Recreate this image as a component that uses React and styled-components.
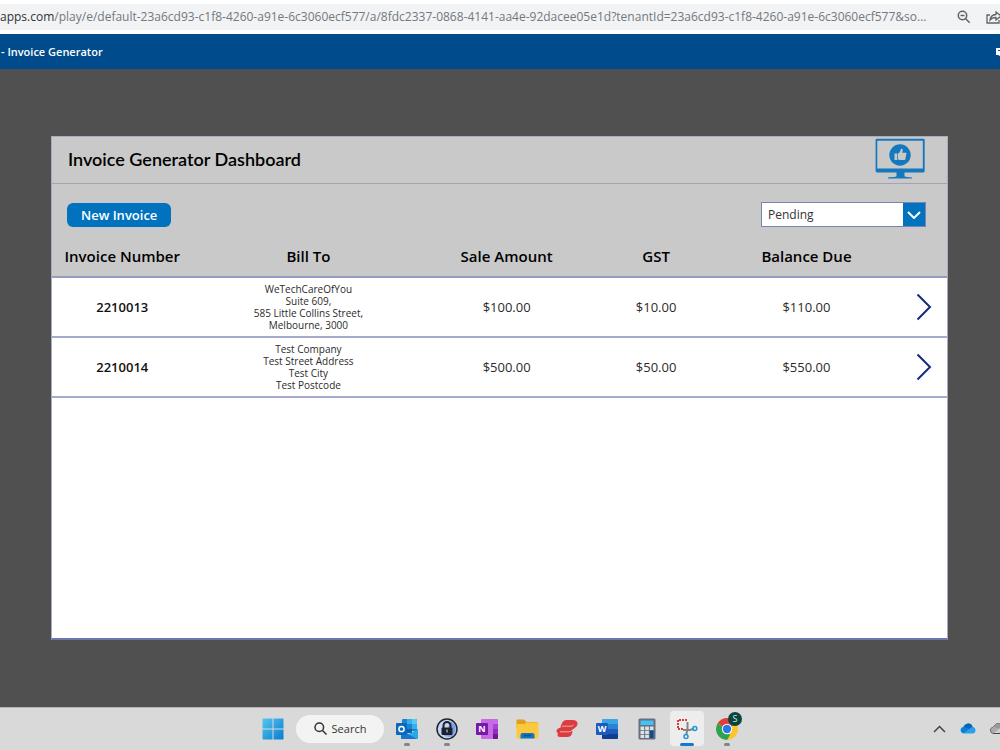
import React, { useState } from 'react';
import styled, { createGlobalStyle } from 'styled-components';

const GlobalStyle = createGlobalStyle`
  * {
    box-sizing: border-box;
  }
  body {
    margin: 0;
    font-family: "Open Sans", "Noto Sans", sans-serif;
    color: #000;
  }
  button, select {
    font-family: inherit;
  }
`;

const Page = styled.div`
  display: flex;
  flex-direction: column;
  min-height: 100vh;
  overflow: hidden;
  background: #505050;
`;

const AddressBar = styled.div`
  display: flex;
  align-items: center;
  height: 34px;
  border-top: 4px solid #fff;
  border-bottom: 4px solid #fff;
  background: #f1f3f4;
  overflow: hidden;
`;

const Url = styled.div`
  flex: 1;
  min-width: 0;
  white-space: nowrap;
  font-size: 12px;
  line-height: 20px;
  color: #75787c;
`;

const Host = styled.span`
  color: #303236;
`;

const BarActions = styled.div`
  display: flex;
  flex: none;
  gap: 15px;
  width: 43px;
`;

const IconButton = styled.button`
  display: flex;
  flex: none;
  align-items: center;
  justify-content: center;
  padding: 0;
  border: none;
  background: none;
  color: ${props => props.$color || '#5f6368'};
  cursor: pointer;
`;

const AppHeader = styled.header`
  display: flex;
  align-items: center;
  justify-content: space-between;
  height: 35px;
  background: #004b8b;
  color: #fff;
  overflow: hidden;
`;

const AppName = styled.div`
  padding-left: 1px;
  font-size: 11px;
  font-weight: 600;
  line-height: 16px;
`;

const Workspace = styled.main`
  display: flex;
  flex: 1;
  padding: 67px 52px 67px 51px;
`;

const Panel = styled.section`
  display: flex;
  flex: 1;
  flex-direction: column;
  min-width: 0;
  border: 1px solid #a9acbf;
  border-bottom: 2px solid #6a76ae;
  background: #fff;
`;

const TitleBar = styled.div`
  display: flex;
  align-items: center;
  justify-content: space-between;
  height: 47px;
  padding: 0 22px 2px 16px;
  border-bottom: 1px solid #a2a4b3;
  background: #c9c9c9;
`;

const Title = styled.h1`
  margin: 0;
  font-family: Lato, sans-serif;
  font-size: 18px;
  font-weight: 600;
  line-height: 24px;
`;

const Toolbar = styled.div`
  display: flex;
  align-items: center;
  justify-content: space-between;
  height: 51px;
  padding: 10px 21px 0 15px;
  background: #c9c9c9;
`;

const PrimaryButton = styled.button`
  height: 24px;
  padding: 0 14px;
  border: none;
  border-radius: 6px;
  background: #0072be;
  color: #fff;
  font-size: 13px;
  font-weight: 600;
  line-height: 24px;
  cursor: pointer;
`;

const SelectWrap = styled.div`
  display: flex;
  width: 165px;
  height: 25px;
  border: 1px solid #7a84b4;
  background: #0072be;
`;

const StatusSelect = styled.select`
  flex: 1;
  min-width: 0;
  padding: 0 6px;
  border: none;
  border-radius: 0;
  appearance: none;
  background: #fff;
  color: #333;
  font-size: 12px;
`;

const Arrow = styled.label`
  display: flex;
  align-items: center;
  justify-content: center;
  width: 22px;
`;

const InvoiceTable = styled.table`
  width: 100%;
  table-layout: fixed;
  border-collapse: collapse;
`;

const HeadCell = styled.th`
  height: 42px;
  padding: 0;
  border-bottom: 2px solid #959cc3;
  background: #c9c9c9;
  font-size: 15px;
  font-weight: 600;
`;

const Cell = styled.td`
  height: 60px;
  padding: 0;
  border-bottom: 2px solid #a5abcd;
  text-align: center;
  font-size: ${props => (props.$small ? '10px' : '13px')};
  font-weight: ${props => (props.$strong ? 600 : 400)};
  line-height: ${props => (props.$small ? '12px' : '20px')};
  color: ${props => (props.$strong ? '#111' : '#2b2b2b')};
`;

const ChevronButton = styled(IconButton)`
  margin: 0 15px 0 auto;
`;

const Taskbar = styled.footer`
  display: grid;
  grid-template-columns: 1fr auto 1fr;
  align-items: center;
  height: 43px;
  padding-bottom: 1px;
  border-top: 1px solid #b5b5b5;
  background: #d9d9d9;
`;

const Apps = styled.nav`
  display: flex;
  grid-column: 2;
  align-items: center;
  gap: 6px;
`;

const AppButton = styled.button`
  position: relative;
  display: flex;
  align-items: center;
  justify-content: center;
  width: 34px;
  height: 35px;
  padding: 0;
  border: none;
  border-radius: 4px;
  background: ${props => (props.$active ? '#ededed' : 'transparent')};
  cursor: pointer;

  &::after {
    content: "";
    display: ${props => (props.$open || props.$active ? 'block' : 'none')};
    position: absolute;
    bottom: 0;
    left: 50%;
    width: ${props => (props.$active ? '14px' : '6px')};
    height: 3px;
    border-radius: 2px;
    background: ${props => (props.$active ? '#1478cf' : '#858585')};
    transform: translateX(-50%);
  }
`;

const SearchButton = styled.button`
  display: flex;
  align-items: center;
  justify-content: center;
  gap: 5px;
  width: 88px;
  height: 28px;
  border: none;
  border-radius: 14px;
  background: #f3f3f3;
  color: #333;
  font-size: 11px;
  cursor: pointer;
`;

const Badge = styled.span`
  position: absolute;
  top: 1px;
  right: 2px;
  width: 14px;
  height: 14px;
  border-radius: 50%;
  background: #09463f;
  color: #d5e5e2;
  font-size: 9px;
  line-height: 14px;
  text-align: center;
`;

const Tray = styled.div`
  display: flex;
  align-items: center;
  justify-content: flex-end;
  gap: 14px;
  margin-right: -6px;
`;

const MonitorLogo = () => (
  <svg width="50" height="42" viewBox="0 0 50 42" fill="#1478bf">
    <path fillRule="evenodd" d="M1.500.8h47q1.200 0 1.200 1.200v31q0 1.400-1.400 1.400H2q-1.400 0-1.400-1.400V2Q.6.800 1.500.8zM2.300 2.700v27.800h45.500V2.700z" />
    <path d="M21.500 34h8v4.200c1 .8 4 .8 7.500 1.200v1.100H13v-1.100c3.500-.4 7.500-.4 8.500-1.200z" />
    <circle cx="25" cy="17" r="10.700" />
    <path fill="#c9c9c9" d="M19.500 15.500h2.800v6.500h-2.800zM23 15.500l1.800-1.300 1-3c.3-.8 2-.5 1.900 1l-.5 2.600h3.400c1 0 1.300 1.300.6 1.800l-.8 4.400c-.1.600-.6 1-1.200 1h-4.700L23 21.300z" />
  </svg>
);

const WindowsIcon = () => (
  <svg width="22" height="22" viewBox="0 0 22 22">
    <defs>
      <linearGradient id="win" x1="0" y1="0" x2="1" y2="1">
        <stop offset="0" stopColor="#55c8ef" />
        <stop offset="1" stopColor="#087bd0" />
      </linearGradient>
    </defs>
    <path fill="url(#win)" d="M1 .5h9.500v10H.5V1zM11.500.5H21l.5.500v9.500h-10zM.5 11.500h10v10H1l-.5-.5zM11.500 11.500h10V21l-.5.500h-9.500z" />
  </svg>
);

const OutlookIcon = () => (
  <svg width="22" height="22" viewBox="0 0 22 22">
    <rect x="6" y="1" width="15" height="12" rx="1" fill="#1684d3" />
    <path fill="#38aee8" d="M11 1h5v5h-5zM16 6h5v5h-5z" />
    <path fill="#55caf5" d="M16 1h4q1 0 1 1v4h-5z" />
    <path fill="#0d5faf" d="M6 6h5v5H6zM11 11h5v4h-5z" />
    <path fill="#2aa7e7" d="M5 12l8 4 9-5v9q0 1-1 1H6q-1 0-1-1z" />
    <path fill="#1676ca" d="M6 13l15 8H6q-1 0-1-1v-7z" />
    <rect x="0" y="5" width="11" height="12" rx="1" fill="#0969bd" />
    <circle cx="5.500" cy="11" r="2.600" fill="none" stroke="#fff" strokeWidth="1.500" />
  </svg>
);

const OneNoteIcon = () => (
  <svg width="22" height="22" viewBox="0 0 22 22">
    <rect x="5" y="1" width="17" height="20" rx="1" fill="#c66be5" />
    <path fill="#a944d0" d="M17 6h5v5h-5z" />
    <path fill="#8f2fbd" d="M17 11h5v5h-5z" />
    <path fill="#6f1795" d="M17 16h5v4q0 1-1 1h-4z" />
    <rect x="0" y="5" width="12" height="12" rx="1" fill="#7719aa" />
    <text x="6" y="14" textAnchor="middle" fill="#fff" fontSize="9" fontWeight="700" fontFamily="Open Sans, sans-serif">N</text>
  </svg>
);

const WordIcon = () => (
  <svg width="22" height="22" viewBox="0 0 22 22">
    <rect x="6" y="1" width="16" height="20" rx="1" fill="#3da4e8" />
    <path fill="#2b83d2" d="M6 6h16v5H6z" />
    <path fill="#1b5cbe" d="M6 11h16v5H6z" />
    <path fill="#103f91" d="M6 16h16v4q0 1-1 1H7q-1 0-1-1z" />
    <rect x="0" y="5" width="12" height="12" rx="1" fill="#1a5cbd" />
    <text x="6" y="14" textAnchor="middle" fill="#fff" fontSize="9" fontWeight="700" fontFamily="Open Sans, sans-serif">W</text>
  </svg>
);

const LockIcon = () => (
  <svg width="22" height="22" viewBox="0 0 22 22">
    <circle cx="11" cy="11" r="10" fill="#c3d6f7" stroke="#20242c" strokeWidth="1.500" />
    <path d="M15 3.500a8.500 8.500 0 0 1-1 15.500l-6-1z" fill="#7b9df0" />
    <path d="M7.500 10V7.500a3.500 3.500 0 0 1 7 0V10" fill="none" stroke="#1d2028" strokeWidth="2" />
    <rect x="5.500" y="9.500" width="11" height="7.500" rx="1" fill="#1d2028" />
    <path d="M11 11.500v3" stroke="#9aa5bd" strokeWidth="1.500" />
  </svg>
);

const FolderIcon = () => (
  <svg width="23" height="20" viewBox="0 0 23 20">
    <path fill="#dda01f" d="M1 .5h7l2.500 2.500H21q1 0 1 1v5H.5V1z" />
    <path fill="#fbc93d" d="M.5 5h8l2-1.500h11q1 0 1 1V18q0 1.500-1.500 1.500H2Q.5 19.500.5 18z" />
    <path fill="#1177c4" d="M4.500 19.500V16q0-2 2-2h10q2 0 2 2v3.500z" />
    <path d="M8 16.500h7" stroke="#0a4f91" strokeWidth="1.500" />
  </svg>
);

const RedIcon = () => (
  <svg width="22" height="20" viewBox="0 0 22 20">
    <path fill="#dc3c3f" d="M10.500 1h6q5.500 0 5 4.500-.5 2-2.500 3.200L16 11q.5 1 .3 2.500-.8 4.500-5.300 4.500H4q-2.800-.3-2.500-2.500L2 14Q0 13.500.5 11.500q.8-2.500 4-2.700Q4.500 7 6 4q1.500-3 4.500-3z" />
    <path fill="none" stroke="#efaaa8" d="M6 7.200h9q2 0 2.800-1.600M4 12.800h9q2.500 0 3-1.800" />
  </svg>
);

const CalculatorIcon = () => (
  <svg width="18" height="22" viewBox="0 0 18 22">
    <rect x=".5" y=".5" width="17" height="21" rx="1.500" fill="#65707c" />
    <rect x="2.500" y="2.500" width="13" height="4.500" fill="#45c2f2" />
    <path fill="#dde2e7" d="M2.500 8.500h3.700V12H2.500zM7.200 8.500h3.700V12H7.200zM11.900 8.500h3.600V12h-3.600zM2.500 12.800h3.700v3.500H2.500zM7.200 12.800h3.700v3.500H7.200zM2.500 17.100h3.700v2.900H2.500zM7.200 17.100h3.700v2.900H7.200z" />
    <path fill="#0c4e8f" d="M11.900 12.800h3.600V20h-3.600z" />
  </svg>
);

const SnipIcon = () => (
  <svg width="22" height="22" viewBox="0 0 22 22" fill="none">
    <path d="M11 2H2v9h5" stroke="#d63b3b" strokeWidth="2" strokeDasharray="2 1" />
    <path d="M11.500 4v8l-1.500 5M7 12h7l4-1.500" stroke="#858585" strokeWidth="2" />
    <circle cx="10" cy="18.500" r="2" stroke="#2196dc" strokeWidth="1.500" />
    <circle cx="18.800" cy="10.500" r="2" stroke="#2196dc" strokeWidth="1.500" />
  </svg>
);

const ChromeIcon = () => (
  <svg width="22" height="22" viewBox="0 0 22 22">
    <path fill="#de4035" d="M11 11L1.500 5.500a11 11 0 0 1 19 0z" />
    <path fill="#fbc52c" d="M11 11l9.500-5.500A11 11 0 0 1 11 22z" />
    <path fill="#31a350" d="M11 11l3 6-3 5A11 11 0 0 1 1.500 5.500z" />
    <circle cx="11" cy="11" r="5.200" fill="#fff" />
    <circle cx="11" cy="11" r="4.200" fill="#2879e8" />
  </svg>
);

const SearchIcon = () => (
  <svg width="13" height="13" viewBox="0 0 13 13" fill="none" stroke="#333" strokeWidth="1.500">
    <circle cx="5.300" cy="5.300" r="4.300" />
    <path d="M8.500 8.500l4 4" />
  </svg>
);

const CloudIcon = ({ muted }) => (
  <svg width="16" height="11" viewBox="0 0 16 11" stroke={muted ? '#444' : 'none'}>
    <path fill={muted ? '#d0d0d0' : '#28a0ea'} d="M4 10.500q-3.500-.2-3.500-3.200 0-2.800 3-3.200Q5 .5 8.500.5q3 0 4 3.200 3 .5 3 3.500 0 3-3 3.300z" />
    <path fill={muted ? '#999' : '#0864b5'} stroke="none" d="M3.500 4Q5 .5 8.500.5q3 0 4 3.200L9 6z" />
    <path fill={muted ? '#aaa' : '#0a7fd5'} stroke="none" d="M1 7q.3-2.800 3-2.900l5 2-5 3.900Q1.500 10 1 7z" />
  </svg>
);

const invoices = [
  {
    number: '2210013',
    billTo: ['WeTechCareOfYou', 'Suite 609,', '585 Little Collins Street,', 'Melbourne, 3000'],
    sale: '$100.00',
    gst: '$10.00',
    balance: '$110.00'
  },
  {
    number: '2210014',
    billTo: ['Test Company', 'Test Street Address', 'Test City', 'Test Postcode'],
    sale: '$500.00',
    gst: '$50.00',
    balance: '$550.00'
  }
];

// share of the table width for each column
const columns = ['15.7%', '25.9%', '18.4%', '15%', '18.6%', '6.4%'];

const InvoiceRow = ({ invoice }) => (
  <tr>
    <Cell $strong>{invoice.number}</Cell>
    <Cell $small>
      {invoice.billTo.map(line => <div key={line}>{line}</div>)}
    </Cell>
    <Cell>{invoice.sale}</Cell>
    <Cell>{invoice.gst}</Cell>
    <Cell>{invoice.balance}</Cell>
    <Cell>
      <ChevronButton $color="#17297c" aria-label={`Open invoice ${invoice.number}`}>
        <svg width="16" height="28" viewBox="0 0 16 28" fill="none" stroke="currentColor" strokeWidth="2">
          <path d="M1.500 1.500L14 14 1.500 26.500" />
        </svg>
      </ChevronButton>
    </Cell>
  </tr>
);

const App = () => {
  const [status, setStatus] = useState('Pending');

  return (
    <Page>
      <GlobalStyle />
      <AddressBar>
        <Url>
          <Host>apps.com</Host>/play/e/default-23a6cd93-c1f8-4260-a91e-6c3060ecf577/a/8fdc2337-0868-4141-aa4e-92dacee05e1d?tenantId=23a6cd93-c1f8-4260-a91e-6c3060ecf577&amp;so...
        </Url>
        <BarActions>
          <IconButton aria-label="Zoom">
            <svg width="14" height="14" viewBox="0 0 14 14" fill="none" stroke="currentColor" strokeWidth="1.500">
              <circle cx="5.500" cy="5.500" r="4.200" />
              <path d="M8.700 8.700l4 4M3.500 5.500h4" />
            </svg>
          </IconButton>
          <IconButton aria-label="Share">
            <svg width="18" height="14" viewBox="0 0 18 14" fill="none" stroke="currentColor" strokeWidth="1.300">
              <path d="M4 5H1v8h12v-3" />
              <path d="M4 10q.5-5 6-5.500V2l5 4-5 4V7.500Q6 7.500 4 10z" />
            </svg>
          </IconButton>
        </BarActions>
      </AddressBar>
      <AppHeader>
        <AppName>- Invoice Generator</AppName>
        <IconButton $color="#fff" aria-label="Comments">
          <svg width="4" height="8" viewBox="0 0 4 8">
            <path fill="currentColor" d="M0 0h4v8L2 7H0z" />
            <path fill="#004b8b" d="M2 2h2v1H2z" />
          </svg>
        </IconButton>
      </AppHeader>
      <Workspace>
        <Panel>
          <TitleBar>
            <Title>Invoice Generator Dashboard</Title>
            <MonitorLogo />
          </TitleBar>
          <Toolbar>
            <PrimaryButton>New Invoice</PrimaryButton>
            <SelectWrap>
              <StatusSelect id="status" aria-label="Status" value={status} onChange={e => setStatus(e.target.value)}>
                <option>Pending</option>
                <option>Paid</option>
              </StatusSelect>
              <Arrow htmlFor="status">
                <svg width="14" height="8" viewBox="0 0 14 8" fill="none" stroke="#fff" strokeWidth="2">
                  <path d="M1 1l6 6 6-6" />
                </svg>
              </Arrow>
            </SelectWrap>
          </Toolbar>
          <InvoiceTable>
            <colgroup>
              {columns.map((width, i) => <col key={i} width={width} />)}
            </colgroup>
            <thead>
              <tr>
                <HeadCell>Invoice Number</HeadCell>
                <HeadCell>Bill To</HeadCell>
                <HeadCell>Sale Amount</HeadCell>
                <HeadCell>GST</HeadCell>
                <HeadCell>Balance Due</HeadCell>
                <HeadCell as="td" />
              </tr>
            </thead>
            <tbody>
              {invoices.map(invoice => <InvoiceRow key={invoice.number} invoice={invoice} />)}
            </tbody>
          </InvoiceTable>
        </Panel>
      </Workspace>
      <Taskbar>
        <Apps>
          <AppButton aria-label="Start"><WindowsIcon /></AppButton>
          <SearchButton><SearchIcon />Search</SearchButton>
          <AppButton $open aria-label="Outlook"><OutlookIcon /></AppButton>
          <AppButton $open aria-label="Password manager"><LockIcon /></AppButton>
          <AppButton aria-label="OneNote"><OneNoteIcon /></AppButton>
          <AppButton aria-label="Files"><FolderIcon /></AppButton>
          <AppButton aria-label="Express"><RedIcon /></AppButton>
          <AppButton aria-label="Word"><WordIcon /></AppButton>
          <AppButton aria-label="Calculator"><CalculatorIcon /></AppButton>
          <AppButton $active aria-label="Snipping tool"><SnipIcon /></AppButton>
          <AppButton $open aria-label="Chrome">
            <ChromeIcon />
            <Badge>S</Badge>
          </AppButton>
        </Apps>
        <Tray>
          <IconButton aria-label="Hidden icons">
            <svg width="13" height="8" viewBox="0 0 13 8" fill="none" stroke="#444" strokeWidth="1.500">
              <path d="M1 7l5.500-5.500L12 7" />
            </svg>
          </IconButton>
          <IconButton aria-label="OneDrive"><CloudIcon /></IconButton>
          <IconButton aria-label="Cloud"><CloudIcon muted /></IconButton>
        </Tray>
      </Taskbar>
    </Page>
  );
};

export default App;
